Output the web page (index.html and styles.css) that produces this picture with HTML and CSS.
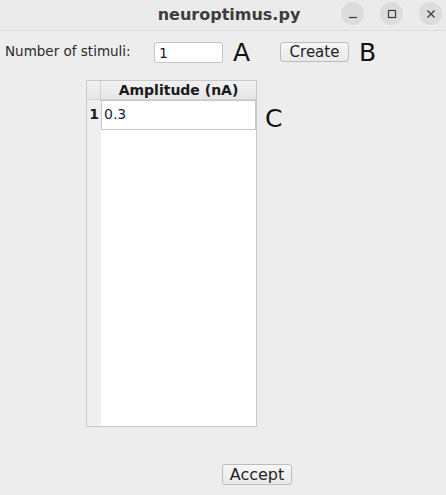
FILE: index.html
```html
<!DOCTYPE html>
<html>
<head>
<meta charset="utf-8">
<link rel="stylesheet" href="styles.css">
</head>
<body>
<div class="window">
  <header class="titlebar">
    <div class="title">neuroptimus.py</div>
    <div class="wbtns">
      <span class="wbtn"><svg width="10" height="10" viewBox="0 0 10 10"><path d="M1 8.5h8" stroke="#3a3a3a" stroke-width="1.2"/></svg></span>
      <span class="wbtn"><svg width="10" height="10" viewBox="0 0 10 10"><rect x="1.5" y="1.5" width="7" height="7" fill="none" stroke="#3a3a3a" stroke-width="1.2"/></svg></span>
      <span class="wbtn"><svg width="10" height="10" viewBox="0 0 10 10"><path d="M1.5 1.5l7 7M8.5 1.5l-7 7" stroke="#3a3a3a" stroke-width="1.3"/></svg></span>
    </div>
  </header>
  <main class="content">
    <div class="toprow">
      <span class="label">Number of stimuli:</span>
      <span class="input">1</span>
      <span class="letter la">A</span>
      <span class="btn create">Create</span>
      <span class="letter lb">B</span>
    </div>
    <div class="tablerow">
      <div class="table">
        <div class="thead">
          <div class="corner"></div>
          <div class="hcell">Amplitude (nA)</div>
        </div>
        <div class="trow">
          <div class="rnum">1</div>
          <div class="cell">0.3</div>
        </div>
        <div class="tfill">
          <div class="rfill"></div>
          <div class="cfill"></div>
        </div>
      </div>
      <span class="letter lc">C</span>
    </div>
    <div class="bottom">
      <span class="btn accept">Accept</span>
    </div>
  </main>
</div>
</body>
</html>
```
FILE: styles.css
```css
* { box-sizing: border-box; }
html, body { margin: 0; padding: 0; }
body {
  width: 446px;
  height: 495px;
  background: #ededed;
  font-family: "DejaVu Sans", "Noto Sans", sans-serif;
  color: #1c1c1c;
  overflow: hidden;
}
.window { display: flex; flex-direction: column; height: 495px; }
.titlebar {
  height: 31px;
  background: #ebebeb;
  border-bottom: 1px solid #dadada;
  position: relative;
  display: flex;
  align-items: center;
  justify-content: center;
}
.title {
  font-weight: bold;
  font-size: 16px;
  color: #3d3d3d;
  margin-left: 12px;
  margin-top: -1px;
}
.wbtns {
  position: absolute;
  right: 4px;
  top: 2px;
  display: flex;
  gap: 16px;
}
.wbtn {
  width: 23px;
  height: 23px;
  border-radius: 50%;
  background: #dcdcdc;
  display: flex;
  align-items: center;
  justify-content: center;
}
.content { flex: 1; display: flex; flex-direction: column; }
.toprow {
  display: flex;
  align-items: center;
  height: 22px;
  margin-top: 10px;
}
.label {
  font-size: 13.5px;
  margin-left: 5px;
  width: 149px;
  color: #2a2a2a;
  margin-top: -2px;
}
.input {
  width: 69px;
  height: 21px;
  background: #fff;
  border: 1px solid #c4c4c4;
  border-radius: 3px;
  font-size: 14px;
  line-height: 17px;
  padding: 2px 0 0 4px;
  color: #1a1a2a;
}
.letter {
  font-family: "DejaVu Sans", sans-serif;
  font-size: 25px;
  color: #111;
  line-height: 1;
}
.la { margin-left: 10px; width: 47px; }
.btn {
  height: 20px;
  border: 1px solid #bcbcbc;
  border-radius: 3px;
  background: linear-gradient(#f7f7f7, #e9e9e9);
  font-size: 15px;
  display: flex;
  align-items: center;
  justify-content: center;
  color: #222;
}
.create { width: 69px; }
.lb { margin-left: 10px; }
.tablerow {
  display: flex;
  align-items: flex-start;
  margin-top: 17px;
  margin-left: 86px;
}
.table {
  width: 171px;
  height: 347px;
  border: 1px solid #c9c9c9;
  background: #fff;
  display: flex;
  flex-direction: column;
}
.thead { display: flex; height: 19px; background: linear-gradient(#f2f2f2, #e6e6e6); border-bottom: 1px solid #d0d0d0; }
.corner { width: 14px; border-right: 1px solid #d0d0d0; }
.hcell {
  flex: 1;
  font-weight: bold;
  font-size: 14px;
  text-align: center;
  line-height: 18px;
  color: #1a1a1a;
}
.trow { display: flex; height: 30px; }
.rnum {
  width: 14px;
  background: #efefef;
  font-weight: bold;
  font-size: 14px;
  text-align: center;
  padding-top: 6px;
}
.cell {
  flex: 1;
  border: 1px solid #c8c8c8;
  font-size: 14px;
  padding: 5px 0 0 2px;
  color: #141f3c;
}
.tfill { flex: 1; display: flex; }
.rfill { width: 14px; background: #efefef; }
.cfill { flex: 1; }
.lc { margin-left: 8px; margin-top: 26px; }
.bottom {
  margin-top: 37px;
  margin-left: 222px;
}
.accept { width: 70px; height: 21px; font-size: 16px; }
```
